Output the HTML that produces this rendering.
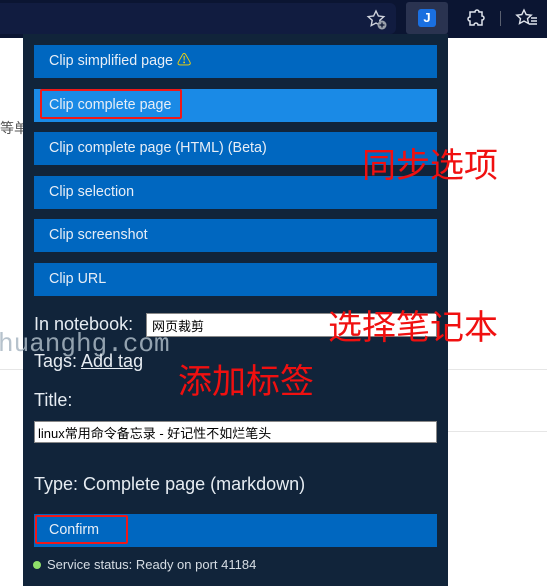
<!DOCTYPE html>
<html><head><meta charset="utf-8"><style>
*{margin:0;padding:0;box-sizing:border-box}
body{width:547px;height:586px;overflow:hidden;position:relative;background:#fff;font-family:"Liberation Sans","Noto Sans CJK SC",sans-serif}
.abs{position:absolute}
.bar{left:0;top:0;width:547px;height:38px;background:#0b1532}
.addr{left:0;top:3px;width:396px;height:31px;background:#111c40;border-radius:0 6px 6px 0}
.pop{left:23px;top:34px;width:425px;height:552px;background:#11243a}
.btn{left:34px;width:403px;height:33px;background:#0067c0;color:#e8eef6;font-size:14.3px;line-height:33px;padding-left:15px}
.lab{color:#e6ecf2;font-size:18px;left:34px}
.red{color:#f01010;font-size:34px;font-family:"Noto Sans CJK SC",sans-serif}
</style></head><body>
<div class="abs bar"></div>
<div class="abs addr"></div>
<svg class="abs" style="left:366px;top:9px" width="22" height="22" viewBox="0 0 22 22"><path d="M10 2l2.4 5 5.4.6-4 3.7 1 5.3L10 14l-4.8 2.6 1-5.3-4-3.7 5.4-.6z" fill="none" stroke="#cfd3dc" stroke-width="1.4"/><circle cx="16" cy="16" r="4.5" fill="#9aa0aa"/><path d="M16 13.5v5M13.5 16h5" stroke="#0b1532" stroke-width="1.3"/></svg>
<div class="abs" style="left:406px;top:2px;width:42px;height:32px;background:#2a3350;border-radius:3px"></div>
<div class="abs" style="left:418px;top:9px;width:18px;height:18px;background:#1a6fe0;border-radius:3px;color:#fff;font-weight:bold;font-size:13px;text-align:center;line-height:18px">J</div>
<svg class="abs" style="left:464px;top:8px" width="22" height="22" viewBox="0 0 22 22"><path d="M8 4h3a2 2 0 014 0h3v4a2 2 0 010 4v5h-4a2 2 0 00-4 0H6v-4a2 2 0 010-4V4z" fill="none" stroke="#e0e4ec" stroke-width="1.5"/></svg>
<div class="abs" style="left:500px;top:11px;width:1px;height:15px;background:#5a6070"></div>
<svg class="abs" style="left:515px;top:8px" width="24" height="22" viewBox="0 0 24 22"><path d="M9 2l2.2 4.6 5 .6-3.7 3.4 1 4.9L9 13l-4.5 2.5 1-4.9L1.8 7.2l5-.6z" fill="none" stroke="#e0e4ec" stroke-width="1.4"/><path d="M16 10h6M16 13h6M14 16h8" stroke="#e0e4ec" stroke-width="1.4"/></svg>
<div class="abs" style="left:0;top:118px;color:#555;font-size:14px">等单</div>
<div class="abs" style="left:448px;top:95px;color:#333;font-size:13px;font-weight:bold">客搭建之旅</div>
<div class="abs" style="left:530px;top:95px;color:#333;font-size:13px;font-weight:bold">关于</div>
<div class="abs" style="left:448px;top:38px;width:99px;height:548px;background:#fff"></div>
<div class="abs" style="left:448px;top:369px;width:99px;height:1px;background:#e6e6e6"></div>
<div class="abs" style="left:448px;top:431px;width:99px;height:1px;background:#e6e6e6"></div>
<div class="abs" style="left:0;top:369px;width:23px;height:1px;background:#e6e6e6"></div>
<div class="abs pop"></div>
<div class="abs" style="left:-2px;top:329px;color:#aab8c4;font-size:26px;font-family:'Liberation Mono',monospace;opacity:.85">huanghg.com</div>
<div class="abs btn" style="top:45px">Clip simplified page <span style="color:#ffd800">⚠</span></div>
<div class="abs btn" style="top:89px;background:#1a8ae6">Clip complete page</div>
<div class="abs" style="left:40px;top:89px;width:142px;height:30px;border:2px solid #f01818;border-radius:2px"></div>
<div class="abs btn" style="top:132px">Clip complete page (HTML) (Beta)</div>
<div class="abs btn" style="top:176px">Clip selection</div>
<div class="abs btn" style="top:219px">Clip screenshot</div>
<div class="abs btn" style="top:263px">Clip URL</div>
<div class="abs lab" style="top:314px">In notebook:</div>
<div class="abs" style="left:146px;top:313px;width:291px;height:24px;background:#fff;border:1px solid #888;font-size:13px;padding:2px 5px;color:#000">网页裁剪</div>
<div class="abs lab" style="top:351px">Tags: <u>Add tag</u></div>
<div class="abs lab" style="top:390px">Title:</div>
<div class="abs" style="left:34px;top:421px;width:403px;height:22px;background:#fff;border:1px solid #888;font-size:13px;padding:1px 3px;color:#000">linux常用命令备忘录 - 好记性不如烂笔头</div>
<div class="abs lab" style="top:474px">Type: Complete page (markdown)</div>
<div class="abs btn" style="top:514px">Confirm</div>
<div class="abs" style="left:35px;top:515px;width:93px;height:29px;border:2px solid #f01818;border-radius:2px"></div>
<div class="abs" style="left:33px;top:561px;width:8px;height:8px;border-radius:50%;background:#8fe06a"></div>
<div class="abs" style="left:47px;top:557px;color:#d6dde4;font-size:13px">Service status: Ready on port 41184</div>
<div class="abs red" style="left:362px;top:138px">同步选项</div>
<div class="abs red" style="left:328px;top:300px">选择笔记本</div>
<div class="abs red" style="left:178px;top:354px">添加标签</div>
</body></html>
